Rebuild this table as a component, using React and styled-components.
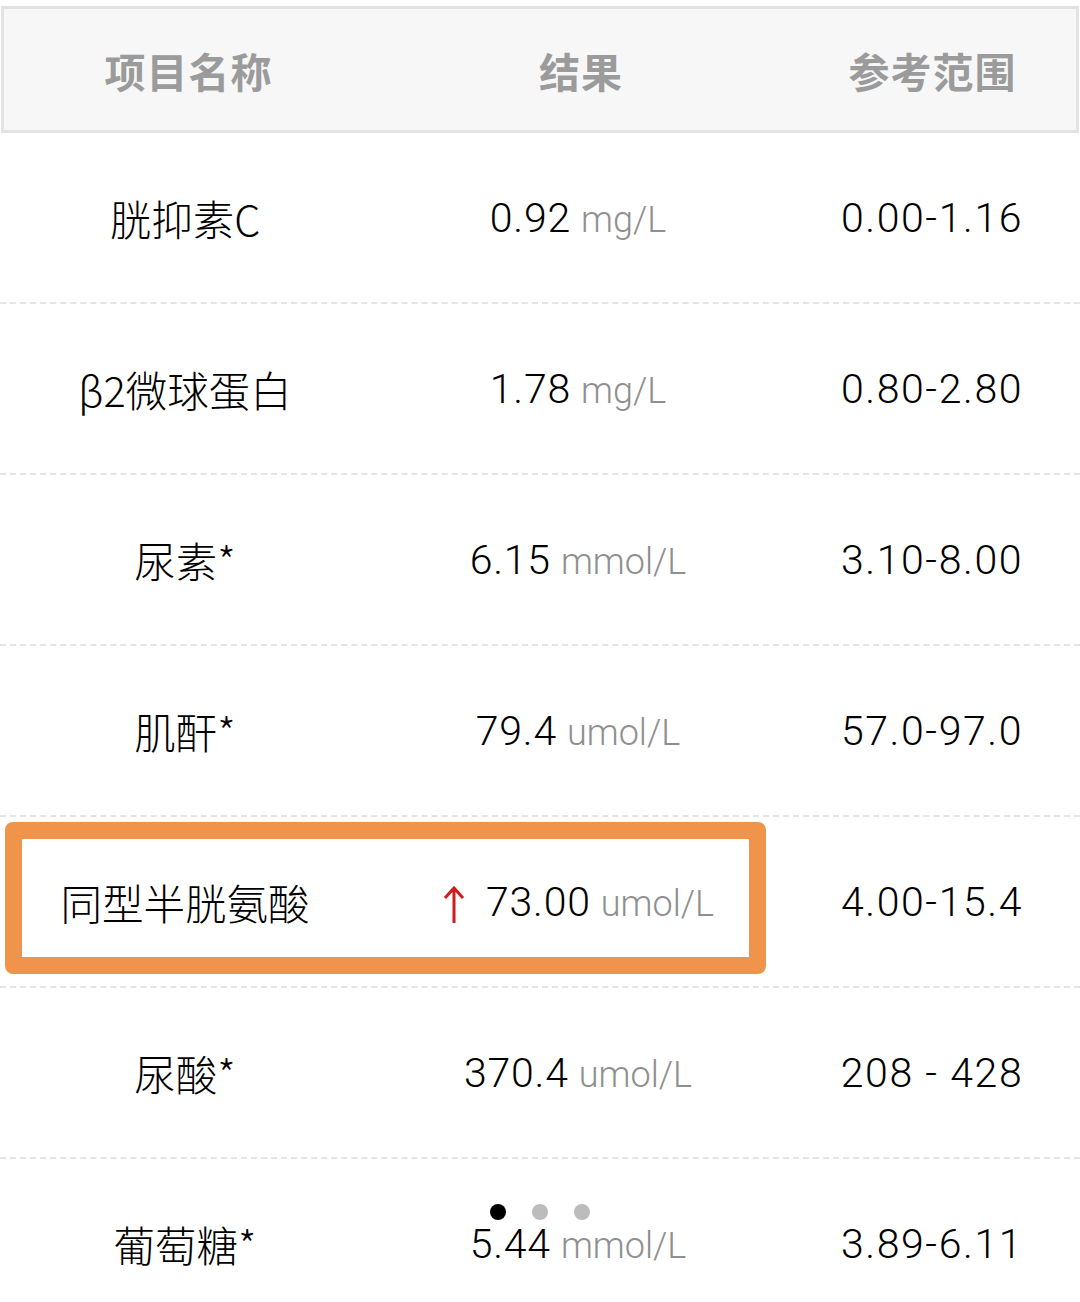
import React from 'react';
import styled, { createGlobalStyle } from 'styled-components';

const GlobalStyle = createGlobalStyle`
  body {
    margin: 0;
    background: #fff;
    font-family: "Roboto", "Noto Sans CJK SC", sans-serif;
  }
`;

const rows = [
  { name: '胱抑素C', value: '0.92', unit: 'mg/L', range: '0.00-1.16' },
  { name: 'β2微球蛋白', value: '1.78', unit: 'mg/L', range: '0.80-2.80' },
  { name: '尿素*', value: '6.15', unit: 'mmol/L', range: '3.10-8.00' },
  { name: '肌酐*', value: '79.4', unit: 'umol/L', range: '57.0-97.0' },
  { name: '同型半胱氨酸', value: '73.00', unit: 'umol/L', range: '4.00-15.4', high: true },
  { name: '尿酸*', value: '370.4', unit: 'umol/L', range: '208 - 428' },
  { name: '葡萄糖*', value: '5.44', unit: 'mmol/L', range: '3.89-6.11' },
];

const Page = styled.div`
  width: 1080px;
  height: 1302px;
  overflow: hidden;
  padding-top: 6px;
  box-sizing: border-box;
`;

const Header = styled.div`
  display: grid;
  grid-template-columns: 369px 416px 1fr;
  align-items: center;
  height: 127px;
  margin: 0 1px;
  box-sizing: border-box;
  border: 3px solid #e3e3e3;
  background: #f7f7f7;
`;

const HeadCell = styled.div`
  text-align: center;
  font-family: "Noto Sans CJK SC", sans-serif;
  font-weight: 700;
  font-size: 41px;
  color: #9b9b9b;
  letter-spacing: 1px;
`;

const Body = styled.div`
  position: relative;
`;

const Row = styled.div`
  display: grid;
  grid-template-columns: 370px 416px 1fr;
  align-items: center;
  height: 171px;
  box-sizing: border-box;
  border-bottom: 2px dashed #e4e4e4;
`;

const Name = styled.div`
  text-align: center;
  font-family: "Noto Sans CJK SC", sans-serif;
  font-size: 41.5px;
  font-weight: 300;
  color: #000;
`;

const Result = styled.div`
  display: flex;
  justify-content: center;
  align-items: baseline;
  gap: 12px;
`;

const Value = styled.span`
  font-size: 41px;
  font-weight: 300;
  color: #000;
  letter-spacing: 0.8px;
`;

const Unit = styled.span`
  font-size: 36px;
  font-weight: 300;
  color: #8f8f8f;
  margin-left: -2px;
`;

const Range = styled.div`
  text-align: center;
  font-size: 41px;
  font-weight: 300;
  color: #000;
  letter-spacing: 1.6px;
  padding-right: 2px;
`;

const UpArrow = styled.svg`
  width: 24px;
  height: 38px;
  align-self: center;
  margin-right: 8px;
  margin-top: 6px;
`;

const Highlight = styled.div`
  position: absolute;
  top: 689px;
  left: 5px;
  width: 761px;
  height: 152px;
  box-sizing: border-box;
  border: 17px solid #f0944b;
  border-radius: 8px;
  pointer-events: none;
`;

const Dots = styled.div`
  position: absolute;
  top: 1071px;
  left: 490px;
  display: flex;
  gap: 26px;
`;

const Dot = styled.span`
  width: 16px;
  height: 16px;
  border-radius: 50%;
  background: ${p => (p.$active ? '#000' : '#bcbcbc')};
`;

export default function App() {
  return (
    <Page>
      <GlobalStyle />
      <Header>
        <HeadCell>项目名称</HeadCell>
        <HeadCell>结果</HeadCell>
        <HeadCell>参考范围</HeadCell>
      </Header>
      <Body>
        {rows.map(r => (
          <Row key={r.name}>
            <Name>{r.name}</Name>
            <Result>
              {r.high ? (
                <UpArrow viewBox="0 0 24 38">
                  <path d="M12 2 V37 M3 12 L12 2 L21 12" stroke="#d01c1c" strokeWidth="3" fill="none" />
                </UpArrow>
              ) : null}
              <Value>{r.value}</Value>
              <Unit>{r.unit}</Unit>
            </Result>
            <Range>{r.range}</Range>
          </Row>
        ))}
        <Highlight />
        <Dots>
          <Dot $active />
          <Dot />
          <Dot />
        </Dots>
      </Body>
    </Page>
  );
}
